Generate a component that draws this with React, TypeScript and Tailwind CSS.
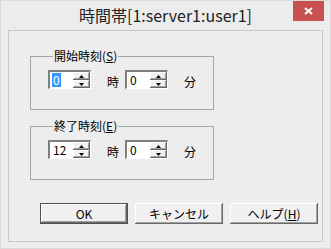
import React from "react";

const font = { fontFamily: '"Noto Sans CJK JP", "Noto Sans", sans-serif' };

const SpinButton = ({ up }: { up: boolean }) => (
  <div className="flex-1 flex items-center justify-center bg-[#f0f0f0] shadow-[inset_-1px_-1px_#696969,inset_1px_1px_#ffffff,inset_-2px_-2px_#a0a0a0]">
    <svg width="5" height="3" viewBox="0 0 5 3">
      {up ? (
        <polygon points="2.5,0 5,3 0,3" fill="#000" />
      ) : (
        <polygon points="0,0 5,0 2.5,3" fill="#000" />
      )}
    </svg>
  </div>
);

const Spin = ({ value, selected }: { value: string; selected?: boolean }) => (
  <div className="shrink-0 flex w-[43px] h-[19px] bg-white border-t-2 border-l-2 border-t-[#808080] border-l-[#808080] border-b border-r border-b-white border-r-white">
    <div className="flex-1 flex items-center pl-[2px] text-[12px] leading-[14px] text-black">
      {selected ? (
        <span className="bg-[#3399ff] text-white px-[1px]">{value}</span>
      ) : (
        <span className="pl-[1px]">{value}</span>
      )}
    </div>
    <div className="w-[17px] shrink-0 flex flex-col">
      <SpinButton up />
      <SpinButton up={false} />
    </div>
  </div>
);

const Group = ({
  label,
  mnemonic,
  hour,
  minute,
  selected,
}: {
  label: string;
  mnemonic: string;
  hour: string;
  minute: string;
  selected?: boolean;
}) => (
  <fieldset className="w-[184px] h-[61px] border border-[#a5a5a5] pl-[17px]">
    <legend className="px-[1px] ml-[5px] text-[12px] leading-[14px] text-black">
      {label}(<span className="underline">{mnemonic}</span>)
    </legend>
    <div className="flex items-center mt-[7px]">
      <Spin value={hour} selected={selected} />
      <span className="shrink-0 ml-[16px] text-[12px] leading-[14px] mt-[4px]">時</span>
      <div className="ml-[6px]">
        <Spin value={minute} />
      </div>
      <span className="shrink-0 ml-[16px] text-[12px] leading-[14px] mt-[4px]">分</span>
    </div>
  </fieldset>
);

const Btn = ({ children, isDefault }: { children: React.ReactNode; isDefault?: boolean }) => (
  <button
    className={
      "w-[88px] h-[21px] bg-[#f0f0f0] text-[12px] leading-[14px] text-black flex items-center justify-center " +
      (isDefault
        ? "border border-[#505050] shadow-[inset_-1px_-1px_#696969,inset_1px_1px_#ffffff,inset_-2px_-2px_#a0a0a0]"
        : "shadow-[inset_-1px_-1px_#696969,inset_1px_1px_#ffffff,inset_-2px_-2px_#a0a0a0]")
    }
  >
    {children}
  </button>
);

export default function App() {
  return (
    <div
      className="w-[331px] h-[249px] bg-[#ececec] flex flex-col border border-[#dadada]"
      style={font}
    >
      <div className="relative h-[29px] flex items-center justify-center">
        <span className="text-[16px] leading-[18px] text-[#222] -mt-[1px]">
          時間帯[1:server1:user1]
        </span>
        <div className="absolute right-[6px] top-0 w-[31px] h-[20px] bg-[#c75050] flex items-center justify-center">
          <svg width="9" height="8" viewBox="0 0 9 8">
            <path d="M1 1 L8 7 M8 1 L1 7" stroke="#fff" strokeWidth="2" />
          </svg>
        </div>
      </div>
      <div className="mx-[7px] h-[212px] border border-[#c8c8c8] bg-[repeating-conic-gradient(#f3f3f3_0_25%,#e7e7e7_0_50%)] bg-[length:2px_2px] flex flex-col pl-[21px] pt-[18px]">
        <Group label="開始時刻" mnemonic="S" hour="0" minute="0" selected />
        <div className="mt-[9px]">
          <Group label="終了時刻" mnemonic="E" hour="12" minute="0" />
        </div>
        <div className="flex gap-[7px] mt-[23px] ml-[10px]">
          <Btn isDefault>OK</Btn>
          <Btn>キャンセル</Btn>
          <Btn>
            <span>
              ヘルプ(<span className="underline">H</span>)
            </span>
          </Btn>
        </div>
      </div>
    </div>
  );
}
